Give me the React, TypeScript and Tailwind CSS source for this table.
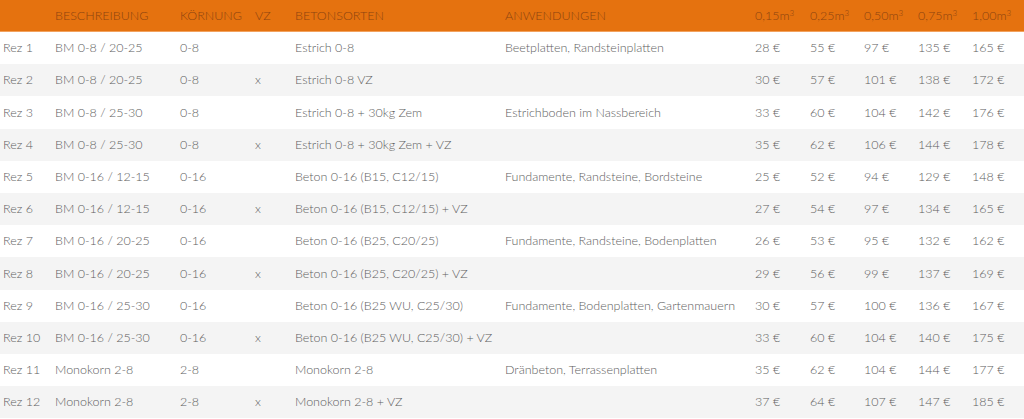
const rows = [
  ["Rez 1", "BM 0-8 / 20-25", "0-8", "", "Estrich 0-8", "Beetplatten, Randsteinplatten", "28", "55", "97", "135", "165"],
  ["Rez 2", "BM 0-8 / 20-25", "0-8", "x", "Estrich 0-8 VZ", "", "30", "57", "101", "138", "172"],
  ["Rez 3", "BM 0-8 / 25-30", "0-8", "", "Estrich 0-8 + 30kg Zem", "Estrichboden im Nassbereich", "33", "60", "104", "142", "176"],
  ["Rez 4", "BM 0-8 / 25-30", "0-8", "x", "Estrich 0-8 + 30kg Zem + VZ", "", "35", "62", "106", "144", "178"],
  ["Rez 5", "BM 0-16 / 12-15", "0-16", "", "Beton 0-16 (B15, C12/15)", "Fundamente, Randsteine, Bordsteine", "25", "52", "94", "129", "148"],
  ["Rez 6", "BM 0-16 / 12-15", "0-16", "x", "Beton 0-16 (B15, C12/15) + VZ", "", "27", "54", "97", "134", "165"],
  ["Rez 7", "BM 0-16 / 20-25", "0-16", "", "Beton 0-16 (B25, C20/25)", "Fundamente, Randsteine, Bodenplatten", "26", "53", "95", "132", "162"],
  ["Rez 8", "BM 0-16 / 20-25", "0-16", "x", "Beton 0-16 (B25, C20/25) + VZ", "", "29", "56", "99", "137", "169"],
  ["Rez 9", "BM 0-16 / 25-30", "0-16", "", "Beton 0-16 (B25 WU, C25/30)", "Fundamente, Bodenplatten, Gartenmauern", "30", "57", "100", "136", "167"],
  ["Rez 10", "BM 0-16 / 25-30", "0-16", "x", "Beton 0-16 (B25 WU, C25/30) + VZ", "", "33", "60", "104", "140", "175"],
  ["Rez 11", "Monokorn 2-8", "2-8", "", "Monokorn 2-8", "Dränbeton, Terrassenplatten", "35", "62", "104", "144", "177"],
  ["Rez 12", "Monokorn 2-8", "2-8", "x", "Monokorn 2-8 + VZ", "", "37", "64", "107", "147", "185"],
]

const volumes = ["0,15", "0,25", "0,50", "0,75", "1,00"]

const cols = "grid grid-cols-[52px_125px_75px_40px_210px_250px_55px_54px_54px_54px_55px]"

export default function App() {
  return (
    <div className="w-[1024px] h-[419px] overflow-hidden bg-white font-['Lato','Liberation_Sans',sans-serif] text-[12.5px] font-light">
      <div className={`${cols} h-[32px] items-center bg-[#e5720f] border-b border-[#f2a25e] text-[#8c4410] text-[12.5px] pt-[1px]`}>
        <div className="pl-[3px]"></div>
        <div className="pl-[3px]">BESCHREIBUNG</div>
        <div className="pl-[3px]">KÖRNUNG</div>
        <div className="pl-[3px]">VZ</div>
        <div className="pl-[3px]">BETONSORTEN</div>
        <div className="pl-[3px]">ANWENDUNGEN</div>
        {volumes.map((v) => (
          <div key={v} className="pl-[3px]">
            {v}m<sup className="text-[8px]">3</sup>
          </div>
        ))}
      </div>
      {rows.map((r, i) => (
        <div
          key={r[0]}
          className={`${cols} h-[32.2px] items-center pt-[1px] text-[#5e5e5e] ${i % 2 === 1 ? "bg-[#f4f4f4]" : "bg-white"}`}
        >
          <div className="pl-[3px] whitespace-nowrap">{r[0]}</div>
          <div className="pl-[3px] whitespace-nowrap">{r[1]}</div>
          <div className="pl-[3px]">{r[2]}</div>
          <div className="pl-[3px]">{r[3]}</div>
          <div className="pl-[3px] whitespace-nowrap">{r[4]}</div>
          <div className="pl-[3px] whitespace-nowrap">{r[5]}</div>
          {r.slice(6).map((p, j) => (
            <div key={j} className="pl-[3px] whitespace-nowrap">
              {p} €
            </div>
          ))}
        </div>
      ))}
    </div>
  )
}
